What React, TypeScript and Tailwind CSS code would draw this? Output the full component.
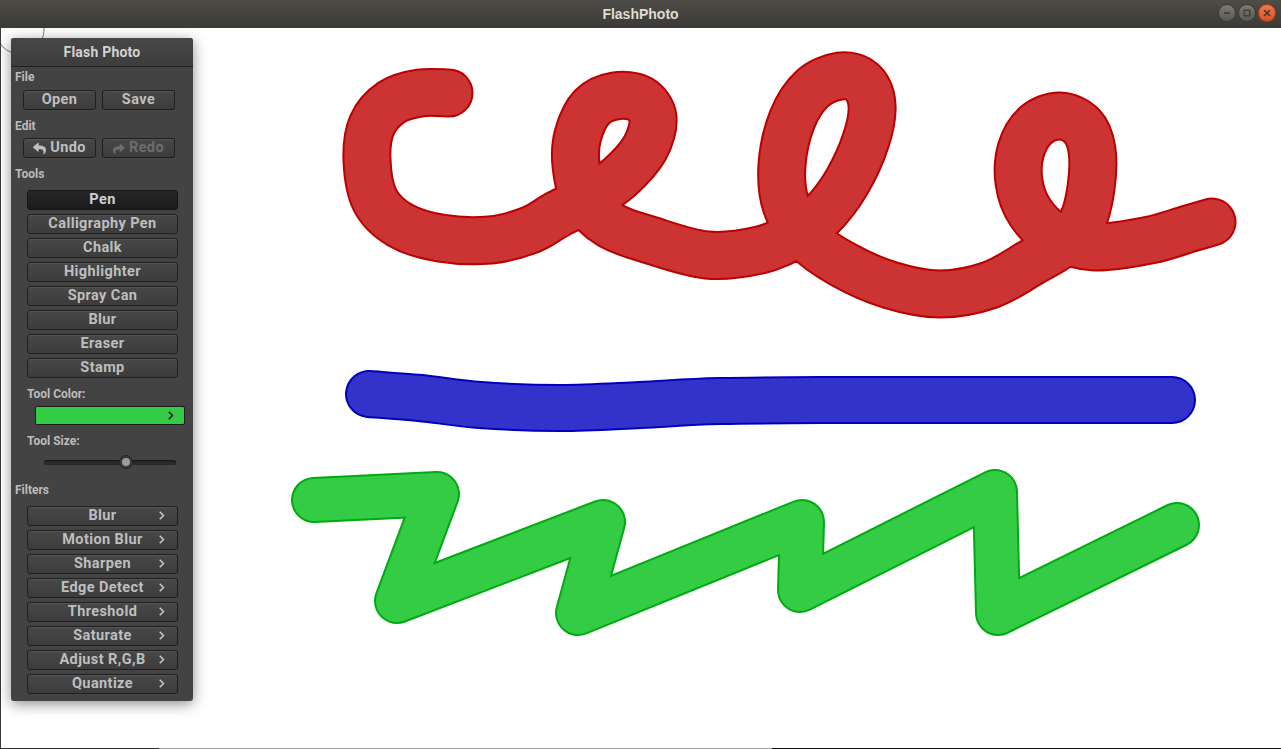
import React from 'react';
import { FaReply, FaShare } from 'react-icons/fa';

type Pt = [number, number];

// catmull-rom through the points -> cubic bezier path
const smooth = (pts: Pt[]) => {
  let d = `M${pts[0][0]},${pts[0][1]}`;
  for (let i = 0; i < pts.length - 1; i++) {
    const p0 = pts[i - 1] || pts[i];
    const p1 = pts[i];
    const p2 = pts[i + 1];
    const p3 = pts[i + 2] || p2;
    const c1x = p1[0] + (p2[0] - p0[0]) / 6;
    const c1y = p1[1] + (p2[1] - p0[1]) / 6;
    const c2x = p2[0] - (p3[0] - p1[0]) / 6;
    const c2y = p2[1] - (p3[1] - p1[1]) / 6;
    d += ` C${c1x.toFixed(1)},${c1y.toFixed(1)} ${c2x.toFixed(1)},${c2y.toFixed(1)} ${p2[0]},${p2[1]}`;
  }
  return d;
};

const poly = (pts: Pt[]) => 'M' + pts.map((p) => p.join(',')).join(' L');

const redPts: Pt[] = [
  [449, 93], [420, 93], [392, 102], [372, 125], [367, 160], [375, 200], [400, 225], [440, 238], [490, 240], [530, 230], [558, 214],
  [590, 198], [620, 177], [645, 148], [653, 118], [640, 99], [615, 96], [592, 107], [578, 135], [576, 165], [585, 200], [610, 225], [650, 240], [707, 255], [760, 250],
  [795, 235], [822, 215], [847, 182], [866, 140], [872, 105], [862, 82], [840, 76], [812, 89], [792, 120], [782, 165], [786, 205], [806, 238], [842, 264], [890, 285], [940, 294], [990, 285], [1032, 262],
  [1062, 244], [1082, 222], [1091, 188], [1092, 150], [1082, 126], [1060, 116], [1036, 125], [1021, 150], [1019, 182], [1030, 212], [1055, 236], [1095, 247], [1150, 240], [1188, 229], [1212, 222],
];

const bluePts: Pt[] = [
  [369, 394], [420, 398], [480, 405], [560, 408], [640, 405], [720, 401], [850, 400], [1000, 400], [1172, 400],
];

const greenPts: Pt[] = [
  [314, 500], [437, 494], [397, 601], [603, 522], [578, 613], [802, 522], [800, 590], [995, 492], [998, 613], [1177, 525],
];

const Stroke = ({ d, w, edge, fill }: { d: string; w: number; edge: string; fill: string }) => (
  <g fill="none" strokeLinecap="round" strokeLinejoin="round">
    <path d={d} stroke={edge} strokeWidth={w} />
    <path d={d} stroke={fill} strokeWidth={w - 4} />
  </g>
);

const Chevron = ({ color }: { color: string }) => (
  <svg width="6" height="9" viewBox="0 0 6 9" className="shrink-0">
    <polyline points="1.2,1.2 4.5,4.5 1.2,7.8" fill="none" stroke={color} strokeWidth="1.6" strokeLinecap="round" strokeLinejoin="round" />
  </svg>
);

const Btn = ({ children, pushed, dim, className = '' }: { children: React.ReactNode; pushed?: boolean; dim?: boolean; className?: string }) => (
  <div
    className={`relative h-[20px] pt-[1px] rounded-[3px] border flex items-center justify-center gap-[4px] text-[14.5px] tracking-[0.4px] font-bold leading-none ${
      pushed
        ? 'border-[#151515] bg-linear-to-b from-[#272727] to-[#1b1b1b] text-[#cfcfcf]'
        : 'border-[#1f1f1f] bg-linear-to-b from-[#484848] to-[#3c3c3c] shadow-[inset_0_1px_0_#545454]'
    } ${pushed ? '' : dim ? 'text-[#6c6c6c]' : 'text-[#bebebe]'} ${className}`}
  >
    {children}
  </div>
);

const GroupLabel = ({ children, className = '' }: { children: React.ReactNode; className?: string }) => (
  <div className={`h-[14px] leading-[14px] text-[12px] font-bold text-[#bcbcbc] ${className}`}>{children}</div>
);

const tools = ['Pen', 'Calligraphy Pen', 'Chalk', 'Highlighter', 'Spray Can', 'Blur', 'Eraser', 'Stamp'];
const filters = ['Blur', 'Motion Blur', 'Sharpen', 'Edge Detect', 'Threshold', 'Saturate', 'Adjust R,G,B', 'Quantize'];

const Panel = () => (
  <div className="absolute left-[10px] top-[10px] w-[182px] h-[663px] rounded-[3px] bg-[#434343] shadow-[0_3px_14px_rgba(0,0,0,0.45)] flex flex-col font-['Roboto',sans-serif]">
    <div className="h-[29px] shrink-0 flex items-center justify-center border-b border-[#222] rounded-t-[3px] bg-linear-to-b from-[#474747] to-[#3d3d3d] text-[14px] tracking-[0.2px] font-bold text-[#d2d2d2]">
      Flash Photo
    </div>
    <div className="flex flex-col">
      <GroupLabel className="mt-[3px] pl-[4px]">File</GroupLabel>
      <div className="mt-[6px] pl-[12px] flex gap-[6px]">
        <Btn className="w-[73px]">Open</Btn>
        <Btn className="w-[73px]">Save</Btn>
      </div>
      <GroupLabel className="mt-[9px] pl-[4px]">Edit</GroupLabel>
      <div className="mt-[5px] pl-[12px] flex gap-[6px]">
        <Btn className="w-[73px]">
          <FaReply size={13} />
          Undo
        </Btn>
        <Btn className="w-[73px]" dim>
          <FaShare size={12} />
          Redo
        </Btn>
      </div>
      <GroupLabel className="mt-[9px] pl-[4px]">Tools</GroupLabel>
      <div className="mt-[9px] pl-[16px] flex flex-col gap-[4px]">
        {tools.map((t, i) => (
          <Btn key={t} pushed={i === 0} className="w-[151px]">
            {t}
          </Btn>
        ))}
      </div>
      <GroupLabel className="mt-[9px] pl-[16px]">Tool Color:</GroupLabel>
      <div className="mt-[5px] ml-[24px] w-[150px] h-[19px] rounded-[2px] border border-[#1c1c1c] bg-[#33cc44] flex items-center justify-end pr-[10px]">
        <Chevron color="#1a1a1a" />
      </div>
      <GroupLabel className="mt-[9px] pl-[16px]">Tool Size:</GroupLabel>
      <div className="mt-[6px] ml-[33px] w-[132px] h-[16px] relative flex items-center">
        <div className="w-full h-[5px] rounded-full bg-[#2b2b2b] shadow-[inset_0_1px_2px_rgba(0,0,0,0.6)]" />
        <div className="absolute left-[75px] top-[1px] w-[14px] h-[14px] rounded-full bg-[#3a3a3a] border border-[#232323] flex items-center justify-center">
          <div className="w-[8px] h-[8px] rounded-full bg-[#9c9c9c]" />
        </div>
      </div>
      <GroupLabel className="mt-[13px] pl-[4px]">Filters</GroupLabel>
      <div className="mt-[9px] pl-[16px] flex flex-col gap-[4px]">
        {filters.map((f) => (
          <Btn key={f} className="w-[151px]">
            {f}
            <span className="absolute right-[12px] top-[4px]">
              <Chevron color="#c4c4c4" />
            </span>
          </Btn>
        ))}
      </div>
    </div>
  </div>
);

const WinBtn = ({ kind }: { kind: 'min' | 'max' | 'close' }) => (
  <div
    className={`w-[18px] h-[18px] rounded-full flex items-center justify-center border ${
      kind === 'close'
        ? 'border-[#a8401c] bg-linear-to-b from-[#f07a4a] to-[#df4f1e]'
        : 'border-[#3a3935] bg-linear-to-b from-[#7b7a75] to-[#5a5954]'
    }`}
  >
    <svg width="10" height="10" viewBox="0 0 10 10">
      {kind === 'min' && <line x1="2" y1="5" x2="8" y2="5" stroke="#3c3b37" strokeWidth="1.6" />}
      {kind === 'max' && <rect x="2.2" y="2.2" width="5.6" height="5.6" fill="none" stroke="#3c3b37" strokeWidth="1.4" />}
      {kind === 'close' && (
        <g stroke="#3c3b37" strokeWidth="1.6" strokeLinecap="round">
          <line x1="2.5" y1="2.5" x2="7.5" y2="7.5" />
          <line x1="7.5" y1="2.5" x2="2.5" y2="7.5" />
        </g>
      )}
    </svg>
  </div>
);

export default function App() {
  return (
    <div className="w-[1281px] h-[749px] flex flex-col overflow-hidden bg-white">
      <div className="h-[28px] shrink-0 relative flex items-center justify-center bg-linear-to-b from-[#4d4c47] to-[#3b3a36] font-['Liberation_Sans',sans-serif]">
        <span className="text-[14px] font-bold text-[#dfdbd2]">FlashPhoto</span>
        <div className="absolute right-[5px] top-[4px] flex gap-[2px]">
          <WinBtn kind="min" />
          <WinBtn kind="max" />
          <WinBtn kind="close" />
        </div>
      </div>
      <div className="relative flex-1 bg-white border-l border-[#3a3a3a]">
        <svg className="absolute inset-0" width="1280" height="720" viewBox="1 28 1280 720">
          <Stroke d={smooth(redPts)} w={49} edge="#bb0000" fill="#cc3333" />
          <Stroke d={smooth(bluePts)} w={48} edge="#0000bb" fill="#3333cc" />
          <Stroke d={poly(greenPts)} w={46} edge="#00aa11" fill="#33cc44" />
          <circle cx="20" cy="30" r="24" fill="none" stroke="#7a7a7a" strokeWidth="1" />
        </svg>
        <Panel />
      </div>
      <div className="h-[1px] shrink-0 flex">
        <div className="w-[159px] bg-[#2e2e2e]" />
        <div className="w-[613px] bg-[#9c9c9c]" />
        <div className="flex-1 bg-[#111]" />
      </div>
    </div>
  );
}
